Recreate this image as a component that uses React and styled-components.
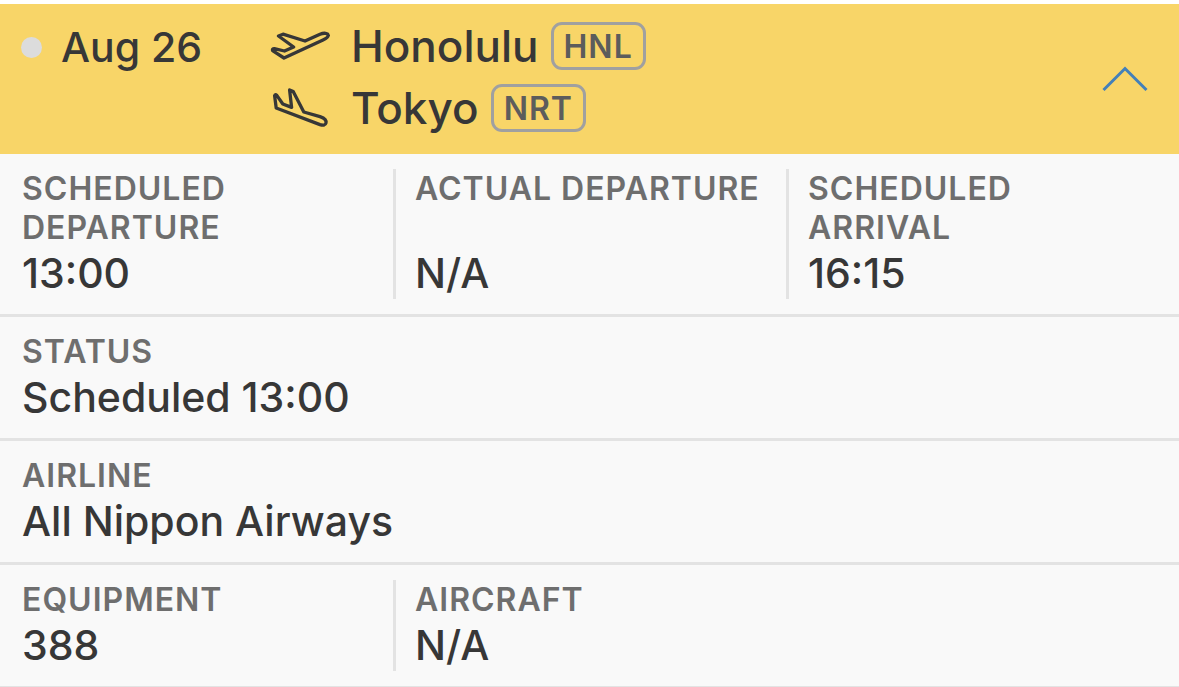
import React, { useState } from 'react';
import styled, { createGlobalStyle } from 'styled-components';

const GlobalStyle = createGlobalStyle`
*{
  box-sizing:border-box;
}
body{
  margin:0;
  background:#fff;
  color:#373737;
  font-family:Inter, "Liberation Sans", sans-serif;
  font-weight:500;
}
`;

const Card = styled.article`
margin-top:4px;
background:#f9f9f9;
`;

const Header = styled.header`
display:flex;
align-items:flex-start;
padding:11px 31px 15px 21px;
background:#f8d568;
`;

const DateCol = styled.div`
display:flex;
align-items:center;
gap:19px;
flex:0 0 249px;
line-height:64px;
font-size:41px;
`;

const Dot = styled.span`
width:21px;
height:21px;
border-radius:50%;
background:#dcdcdc;
`;

const Route = styled.div`
flex:1;
`;

const Stop = styled.div`
display:flex;
align-items:center;
height:62px;
font-size:44px;
`;

const PlaneIcon = styled.svg`
width:60px;
height:60px;
margin-right:21px;
fill:none;
stroke:#373737;
stroke-width:3.3;
stroke-linejoin:round;
`;

const Code = styled.abbr`
height:48px;
margin-left:12px;
padding:0 10px;
border:3px solid #a0a0a0;
border-radius:11px;
color:#5c5c5c;
font-size:32px;
font-weight:600;
line-height:44px;
letter-spacing:1px;
`;

const Toggle = styled.button`
align-self:center;
display:flex;
padding:4px 0 0;
border:0;
background:none;
cursor:pointer;
svg{
  width:46px;
  height:26px;
  fill:none;
  stroke:#4380b9;
  stroke-width:3;
  transform:${(props) => (props.$open ? 'none' : 'rotate(180deg)')};
}
`;

const Details = styled.dl`
margin:0;
`;

const Row = styled.div`
display:grid;
grid-template-columns:repeat(${(props) => props.$cols}, 1fr);
padding:15px 0;
border-bottom:3px solid #e3e3e3;
`;

const Cell = styled.div`
display:flex;
flex-direction:column;
justify-content:space-between;
padding:0 19px 0 22px;
& + &{
  padding-left:19px;
  border-left:3px solid #e3e3e3;
}
`;

const Label = styled.dt`
color:#6e6e6e;
font-size:32px;
font-weight:600;
line-height:39px;
letter-spacing:1px;
text-transform:uppercase;
`;

const Value = styled.dd`
margin:0;
font-size:41px;
line-height:52px;
`;

const rows = [
  {
    cols: 3,
    items: [
      ['Scheduled Departure', '13:00'],
      ['Actual Departure', 'N/A'],
      ['Scheduled Arrival', '16:15'],
    ],
  },
  { cols: 1, items: [['Status', 'Scheduled 13:00']] },
  { cols: 1, items: [['Airline', 'All Nippon Airways']] },
  {
    cols: 3,
    items: [
      ['Equipment', '388'],
      ['Aircraft', 'N/A'],
    ],
  },
];

const Takeoff = () => (
  <PlaneIcon viewBox="0 0 60 60" aria-hidden="true">
    <path d="M8.5 20 L13 18.2 L35 25 L50 18.2 C54 16.6 58 17 58.2 19.3 C58.4 21 56 22.6 53 24 L14 42 L2.6 34.6 Q2 32.4 4.4 32.6 L14.5 35 L23.6 31 Z" />
  </PlaneIcon>
);

const Landing = () => (
  <PlaneIcon viewBox="0 0 60 60" aria-hidden="true">
    <path d="M6.2 30 L4.6 17.6 Q5.2 15.6 6.8 17.4 L12.8 26 L21.6 29.4 L19.6 12 L23.2 13.6 L33.8 34 L50 38.6 C54 40 56.6 42.4 56 45 C55.4 47.4 53 47.6 50 46.6 Z" />
  </PlaneIcon>
);

const App = () => {
  const [isOpen, setOpen] = useState(true);

  return <Card>
    <GlobalStyle />
    <Header>
      <DateCol>
        <Dot />
        <time dateTime="08-26">Aug 26</time>
      </DateCol>
      <Route>
        <Stop><Takeoff />Honolulu<Code>HNL</Code></Stop>
        <Stop><Landing />Tokyo<Code>NRT</Code></Stop>
      </Route>
      <Toggle $open={isOpen} aria-expanded={isOpen} aria-label="Flight details" onClick={() => setOpen(!isOpen)}>
        <svg viewBox="0 0 46 26"><path d="M1.5 24 L23 2.5 L44.5 24" /></svg>
      </Toggle>
    </Header>
    {isOpen && <Details>
      {rows.map((row, i) => (
        <Row key={i} $cols={row.cols}>
          {row.items.map(([label, value]) => (
            <Cell key={label}>
              <Label>{label}</Label>
              <Value>{value}</Value>
            </Cell>
          ))}
        </Row>
      ))}
    </Details>}
  </Card>
}

export default App
